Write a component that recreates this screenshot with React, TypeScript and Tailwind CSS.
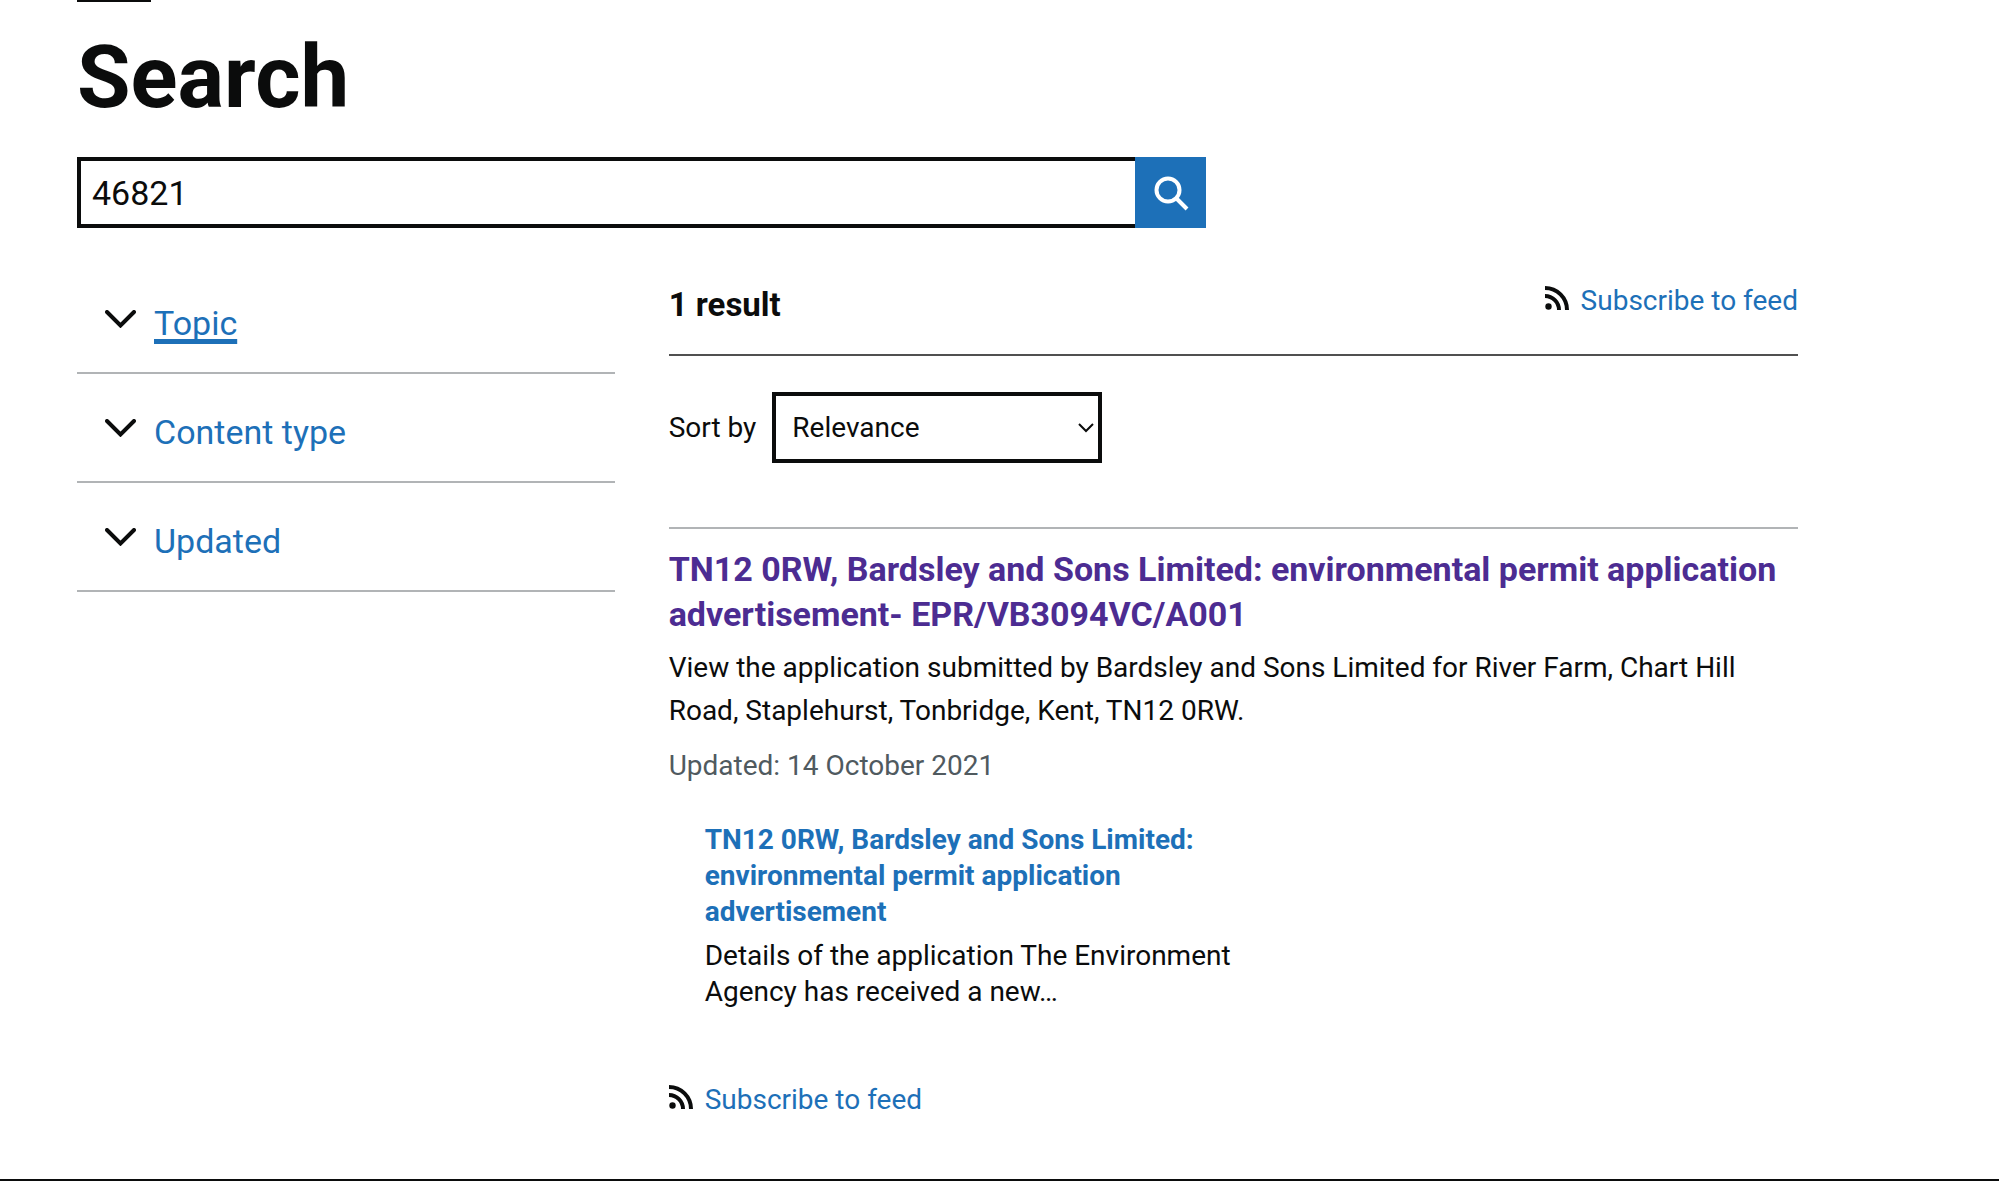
import type { ReactNode } from "react";

const filters = [
  { label: "Topic", active: true },
  { label: "Content type", active: false },
  { label: "Updated", active: false },
];

const sortOptions = ["Relevance", "Updated (newest)", "Updated (oldest)"];

export default function App() {
  return (
    <div className="bg-white font-[Roboto,Arial,sans-serif] text-[28px] leading-9 text-[#0b0c0c]">
      <main className="ml-[77px] mr-[201px]">
        <div className="h-0.5 w-[74px] bg-[#0b0c0c]" />
        <h1 className="mt-[30px] text-[87px] font-bold leading-[90px]">
          Search
        </h1>

        <div className="mt-[35px] grid grid-cols-3 gap-x-[54px] gap-y-[37px]">
          <SearchForm />

          <aside className="col-start-1">
            {filters.map((filter) => (
              <Filter key={filter.label} {...filter} />
            ))}
          </aside>

          <section className="col-span-2">
            <div className="flex items-start justify-between border-b-2 border-[#505050] pb-7 pt-[18px]">
              <h2 className="text-[33px] font-bold leading-[43px]">1 result</h2>
              <FeedLink />
            </div>

            <SortBy />

            <Result />

            <div className="mb-[61px] mt-[72px] flex">
              <FeedLink />
            </div>
          </section>
        </div>
      </main>
      <footer className="border-t-2 border-[#0b0c0c]" />
    </div>
  );
}

function SearchForm() {
  return (
    <form
      role="search"
      className="col-span-2 flex"
      onSubmit={(e) => e.preventDefault()}
    >
      <input
        type="search"
        aria-label="Search"
        defaultValue="46821"
        className="h-[71px] min-w-0 flex-1 appearance-none border-4 border-r-0 border-[#0b0c0c] bg-white px-[11px] text-[34px] outline-none"
      />
      <button
        type="submit"
        aria-label="Search"
        className="flex size-[71px] items-center justify-center bg-[#1d70b8] text-white"
      >
        <svg
          viewBox="0 0 36 36"
          className="size-9"
          fill="none"
          stroke="currentColor"
          strokeWidth="4"
        >
          <circle cx="15" cy="15" r="11.5" />
          <path d="M23 23l11 11" />
        </svg>
      </button>
    </form>
  );
}

function Filter({ label, active }: { label: string; active: boolean }) {
  return (
    <div className="border-b-2 border-[#b1b4b6] pb-7 pl-7 pt-[37px]">
      <button
        type="button"
        aria-expanded={false}
        className="flex items-start gap-[18px] text-[34px] leading-[42px] text-[#1d70b8]"
      >
        <svg
          viewBox="0 0 31 18"
          className="mt-2 h-[18px] w-[31px] text-[#0b0c0c]"
          fill="none"
          stroke="currentColor"
          strokeWidth="4"
          strokeLinecap="round"
        >
          <path d="M2 2l13.500 13.500L29 2" />
        </svg>
        <span
          className={
            active
              ? "underline decoration-[5px] underline-offset-4 [text-decoration-skip-ink:none]"
              : ""
          }
        >
          {label}
        </span>
      </button>
    </div>
  );
}

function SortBy() {
  return (
    <div className="flex items-center gap-4 border-b-2 border-[#b1b4b6] pb-16 pt-9">
      <label htmlFor="order">Sort by</label>
      <div className="grid w-[330px] items-center">
        <select
          id="order"
          className="col-start-1 row-start-1 h-[71px] w-full appearance-none border-4 border-[#0b0c0c] bg-white px-4 outline-none"
        >
          {sortOptions.map((option) => (
            <option key={option}>{option}</option>
          ))}
        </select>
        <svg
          viewBox="0 0 16 10"
          className="pointer-events-none col-start-1 row-start-1 mr-2 h-2.5 w-4 justify-self-end"
          fill="none"
          stroke="currentColor"
          strokeWidth="2"
        >
          <path d="M1 1l7 7 7-7" />
        </svg>
      </div>
    </div>
  );
}

function Result() {
  return (
    <article className="pt-[18px]">
      <h3 className="text-[34px] font-bold leading-[45px]">
        <Link className="text-[#4c2c92]">
          TN12 0RW, Bardsley and Sons Limited: environmental permit application
          advertisement- EPR/VB3094VC/A001
        </Link>
      </h3>
      <p className="mt-[9px] leading-[43px]">
        View the application submitted by Bardsley and Sons Limited for River
        Farm, Chart Hill Road, Staplehurst, Tonbridge, Kent, TN12 0RW.
      </p>
      <p className="mt-3 leading-[43px] text-[#505a5f]">
        Updated: 14 October 2021
      </p>
      <div className="ml-9 mt-[35px] max-w-[550px]">
        <h4 className="font-bold">
          <Link className="text-[#1d70b8]">
            TN12 0RW, Bardsley and Sons Limited: environmental permit
            application advertisement
          </Link>
        </h4>
        <p className="mt-2">
          Details of the application The Environment Agency has received a new…
        </p>
      </div>
    </article>
  );
}

function FeedLink() {
  return (
    <Link className="flex items-start gap-3 text-[#1d70b8]">
      <svg
        viewBox="0 0 24 24"
        className="mt-[3px] size-6 text-[#0b0c0c]"
        fill="none"
        stroke="currentColor"
        strokeWidth="4"
      >
        <circle cx="3.500" cy="20.500" r="3.200" fill="currentColor" stroke="none" />
        <path d="M0 10a14 14 0 0 1 14 14" />
        <path d="M0 2a22 22 0 0 1 22 22" />
      </svg>
      Subscribe to feed
    </Link>
  );
}

function Link({
  className,
  children,
}: {
  className?: string;
  children: ReactNode;
}) {
  return (
    <a href="#" className={className}>
      {children}
    </a>
  );
}
